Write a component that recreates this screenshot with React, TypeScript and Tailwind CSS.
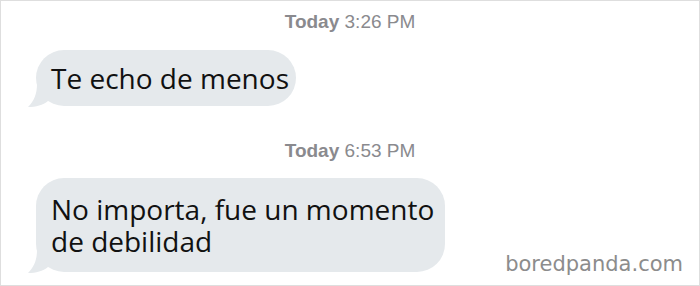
export default function App() {
  return (
    <div className="relative w-[700px] h-[286px] overflow-hidden border border-[#dedede] bg-white">
      <Stamp day="Today" time="3:26 PM" className="mt-[10px]" />

      <Bubble className="mt-[17px] w-[260px] h-[56px] text-[28px]">
        Te echo de menos
      </Bubble>

      <Stamp day="Today" time="6:53 PM" className="mt-[34px]" />

      <Bubble className="mt-[16px] w-[409px] h-[94px] text-[28px] leading-[32px]">
        No importa, fue un momento
        <br />
        de debilidad
      </Bubble>

      <div className="absolute right-[16px] bottom-[9px] text-[21px] leading-[24px] text-[#8c8c8c] font-['DejaVu_Sans',sans-serif]">
        boredpanda.com
      </div>
    </div>
  );
}

function Stamp({ day, time, className }: { day: string; time: string; className?: string }) {
  return (
    <div
      className={
        "text-center text-[19px] leading-[22px] text-[#8a8a8e] font-['Liberation_Sans',Arial,sans-serif] " +
        (className ?? "")
      }
    >
      <span className="font-semibold">{day}</span> {time}
    </div>
  );
}

function Bubble({ children, className }: { children: React.ReactNode; className?: string }) {
  return (
    <div
      className={
        "relative ml-[35px] flex items-center rounded-[28px] bg-[#e5e9ec] pl-[15px] text-[#111] font-['Open_Sans',sans-serif] " +
        (className ?? "")
      }
    >
      <svg
        className="absolute left-[-8px] bottom-[-2px]"
        width="26"
        height="24"
        viewBox="0 0 26 24"
      >
        <path d="M9 0 C9 10 6 17 0 23 C8 23 15 21 20 17 L26 17 L26 0 Z" fill="#e5e9ec" />
      </svg>
      <div className="relative">{children}</div>
    </div>
  );
}
